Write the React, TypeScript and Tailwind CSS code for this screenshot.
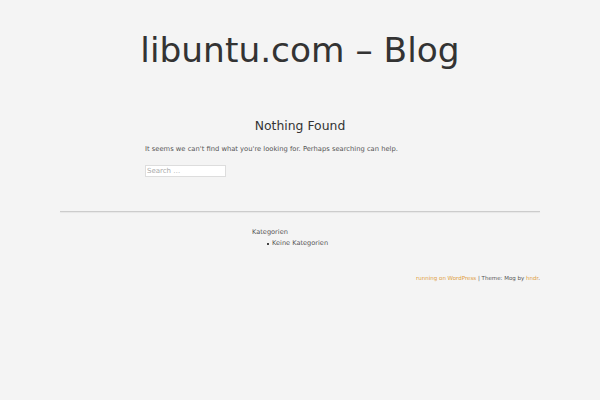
import React from 'react'

const font = { fontFamily: '"DejaVu Sans", Verdana, sans-serif' }

export default function App() {
  return (
    <div className="min-h-[400px] w-full bg-[#f4f4f4] text-[#333]" style={font}>
      <header className="pt-[26px] text-center">
        <h1 className="text-[34.4px] leading-[48px] text-[#333]">libuntu.com – Blog</h1>
      </header>

      <main className="mx-auto mt-[43px] w-[310px]">
        <h2 className="text-center text-[12.4px] leading-[18px] text-[#333]">Nothing Found</h2>
        <p className="mt-[9px] text-[6.75px] leading-[10px] text-[#555]">
          It seems we can't find what you're looking for. Perhaps searching can help.
        </p>
        <form className="mt-[2px]">
          <input
            type="search"
            placeholder="Search …"
            className="h-[12px] w-[81px] border border-[#ddd] bg-white px-[1px] text-[7px] text-[#999] outline-none placeholder:text-[#aaa]"
            style={font}
          />
        </form>
      </main>

      <hr className="mx-[60px] mt-[31px] border-0 border-t border-[#ccc] shadow-[0_1px_1px_rgba(0,0,0,0.06)]" />

      <aside className="mx-auto mt-[15px] w-[96px] text-[6.6px] leading-[11px] text-[#555]">
        <h3>Kategorien</h3>
        <ul className="pl-[15px]">
          <li className="flex items-center gap-[3px]">
            <span className="h-[2px] w-[2px] bg-[#444]" />
            Keine Kategorien
          </li>
        </ul>
      </aside>

      <footer className="mx-[60px] mt-[25px] text-right text-[5.5px] leading-[8px] text-[#555]">
        <a className="text-[#e0a040]">running on WordPress</a> | Theme: Mog by{' '}
        <a className="text-[#e0a040]">hndr</a>.
      </footer>
    </div>
  )
}
